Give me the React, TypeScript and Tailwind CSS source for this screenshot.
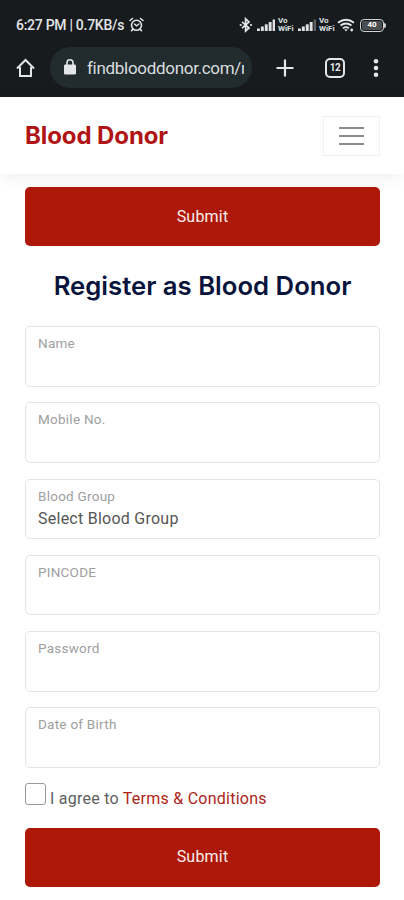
import { FC } from "react"

interface ISignal {
  weak?: boolean
}

interface IField {
  label: string
  value?: string
}

const fields: IField[] = [
  { label: "Name" },
  { label: "Mobile No." },
  { label: "Blood Group", value: "Select Blood Group" },
  { label: "PINCODE" },
  { label: "Password" },
  { label: "Date of Birth" },
]

const Signal: FC<ISignal> = ({ weak }) => (
  <svg width="19" height="13" viewBox="0 0 19 13" fill="#dfe1e2" className="shrink-0">
    <rect x="0" y="9.5" width="2.9" height="2.5" />
    <rect x="3.9" y="7.5" width="2.9" height="4.5" />
    <rect x="7.8" y="5.3" width="2.9" height="6.7" />
    <rect x="11.7" y="3" width="2.9" height="9" />
    <rect x="15.6" y="0.5" width="2.4" height="11.5" opacity={weak ? 0.35 : 1} />
  </svg>
)

const VoWifi: FC = () => (
  <div className="w-[18px] shrink-0 text-[8px] leading-[8px] font-bold text-[#dfe1e2]">
    <p>Vo</p>
    <p>WiFi</p>
  </div>
)

const StatusBar: FC = () => (
  <div className="flex h-[47px] items-center pt-[3px] pl-4 text-[#e3e5e6]">
    <p className="w-[111px] shrink-0 whitespace-nowrap text-[14px] font-medium tracking-[-0.28px]">6:27 PM | 0.7KB/s</p>
    <svg width="17" height="16" viewBox="0 0 17 16" fill="none" stroke="currentColor" strokeWidth="1.6" strokeLinecap="round" className="ml-px shrink-0">
      <circle cx="8.5" cy="8.3" r="5" />
      <path d="M2 3.5 4.5 1.5M12.5 1.5 15 3.5M4.7 12.2 3.5 13.7M12.3 12.2 13.5 13.7" />
      <path d="M6.5 7 8.5 8.8 11 7" strokeWidth="1.3" />
    </svg>
    <svg width="14" height="16" viewBox="0 0 14 16" fill="none" stroke="currentColor" strokeWidth="1.7" className="ml-[94px] shrink-0">
      <path d="m3 4.8 7 6.2-3.4 3V1.8L10 5l-7 6.2" />
      <circle cx="1.7" cy="8" r="1.1" fill="currentColor" stroke="none" />
      <circle cx="12" cy="8" r="1.1" fill="currentColor" stroke="none" />
    </svg>
    <div className="ml-1 flex items-center gap-0.5">
      <Signal />
      <VoWifi />
      <Signal weak />
      <VoWifi />
    </div>
    <svg width="19" height="15" viewBox="0 0 19 15" fill="none" stroke="currentColor" strokeWidth="1.9" className="shrink-0">
      <path d="M1 4.8Q9 -1.5 17 4.8M3.5 7.6Q9 3.2 14.5 7.6M6 10.2Q9 8 12 10.2" />
      <path d="m7.2 11.3 1.8 2.2 1.8-2.2Z" fill="currentColor" stroke="none" />
      <circle cx="14.7" cy="12" r="1.4" fill="currentColor" stroke="none" />
    </svg>
    <div className="ml-1 flex h-[13px] w-6 shrink-0 items-center justify-center rounded-[4px] border-[1.5px] border-[#cfd1d2] p-px">
      <span className="flex h-full w-full items-center justify-center rounded-[2px] bg-[#4a4e50] text-[8px] leading-none font-bold text-white">40</span>
    </div>
    <span className="h-[5px] w-[2px] rounded-r bg-[#cfd1d2]" />
  </div>
)

const BrowserBar: FC = () => (
  <div className="flex h-[41px] items-center pl-4 text-[#e3e5e6]">
    <svg width="19" height="20" viewBox="0 0 19 20" fill="none" stroke="currentColor" strokeWidth="2" strokeLinejoin="miter" className="shrink-0">
      <path d="M4 9v9h11V9M1 10.5 9.5 2 18 10.5" />
    </svg>
    <div className="ml-[15px] flex h-[41px] w-[202px] shrink-0 items-center rounded-full bg-[#222c2f] pl-3.5">
      <svg width="12" height="16" viewBox="0 0 12 16" fill="currentColor" className="mt-[-2px] shrink-0">
        <rect y="5.5" width="12" height="10" rx="1.3" />
        <path d="M3 6V3.8a3 3 0 0 1 6 0V6" fill="none" stroke="currentColor" strokeWidth="1.6" />
      </svg>
      <p className="ml-[11px] w-[157px] overflow-hidden whitespace-nowrap text-[17px] leading-6 tracking-[-0.3px] text-[#d9dddf]">findblooddonor.com/r</p>
    </div>
    <svg width="18" height="18" viewBox="0 0 18 18" stroke="currentColor" strokeWidth="2.2" className="ml-6 shrink-0">
      <path d="M9 .5v17M.5 9h17" />
    </svg>
    <div className="ml-[31px] flex h-5 w-5 shrink-0 items-center justify-center rounded-[5px] border-2 border-[#e3e5e6] text-[10px] leading-none font-bold tracking-[-0.4px]">12</div>
    <svg width="6" height="18" viewBox="0 0 6 18" fill="currentColor" className="ml-7 shrink-0">
      <circle cx="3" cy="2.3" r="2.3" />
      <circle cx="3" cy="9" r="2.3" />
      <circle cx="3" cy="15.7" r="2.3" />
    </svg>
  </div>
)

const SubmitButton: FC = () => (
  <button type="button" className="block h-[59px] w-full rounded-[5px] bg-[#ad1808] text-[16px] tracking-[0.2px] text-[#fbeceb]">
    Submit
  </button>
)

const Field: FC<IField> = ({ label, value }) => (
  <div className="h-[60.5px] rounded-[5px] border border-[#e4e4e4] px-3 pt-2">
    <p className="text-[13.5px] leading-4 tracking-[0.25px] text-[#a0a0a0]">{label}</p>
    {value && <p className="mt-1 text-[16px] leading-[22px] tracking-[0.25px] text-[#555]">{value}</p>}
  </div>
)

const App: FC = () => {
  return (
    <div className="h-[900px] w-[404px] overflow-hidden bg-white font-['Roboto',sans-serif]">
      <div className="h-[97px] bg-[#171b1e]">
        <StatusBar />
        <BrowserBar />
      </div>

      <header className="flex h-[77px] items-center justify-between bg-white pr-6 pl-[25px] shadow-[0_2px_15px_rgba(0,0,0,0.07)]">
        <h1 className="font-['Inter',sans-serif] text-[24px] font-bold tracking-[-0.1px] text-[#b01414]">Blood Donor</h1>
        <button type="button" aria-label="Menu" className="flex h-10 w-[57px] flex-col items-center justify-center gap-[6px] border border-[#f0f0f0]">
          <span className="h-[2px] w-[25px] bg-[#8c8c8c]" />
          <span className="h-[2px] w-[25px] bg-[#8c8c8c]" />
          <span className="h-[2px] w-[25px] bg-[#8c8c8c]" />
        </button>
      </header>

      <main className="pt-[13px] pr-6 pl-[25px]">
        <SubmitButton />
        <h2 className="mt-[21px] text-center font-['Inter',sans-serif] text-[25.7px] leading-[38px] font-semibold whitespace-nowrap text-[#08133b]">Register as Blood Donor</h2>
        <form className="mt-[21px]">
          <div className="flex flex-col gap-[15.8px]">
            {fields.map((field) => (
              <Field key={field.label} {...field} />
            ))}
          </div>
          <div className="mt-[15px] mb-[23px] flex h-[22px]">
            <input type="checkbox" aria-label="I agree" className="h-[22px] w-[21px] shrink-0 appearance-none rounded-[3px] border border-[#999]" />
            <p className="mt-[5px] ml-1 text-[16px] leading-[22px] tracking-[0.25px] whitespace-nowrap text-[#606060]">
              I agree to <a className="text-[#ad2418]">Terms &amp; Conditions</a>
            </p>
          </div>
          <SubmitButton />
        </form>
      </main>
    </div>
  )
}

export default App
